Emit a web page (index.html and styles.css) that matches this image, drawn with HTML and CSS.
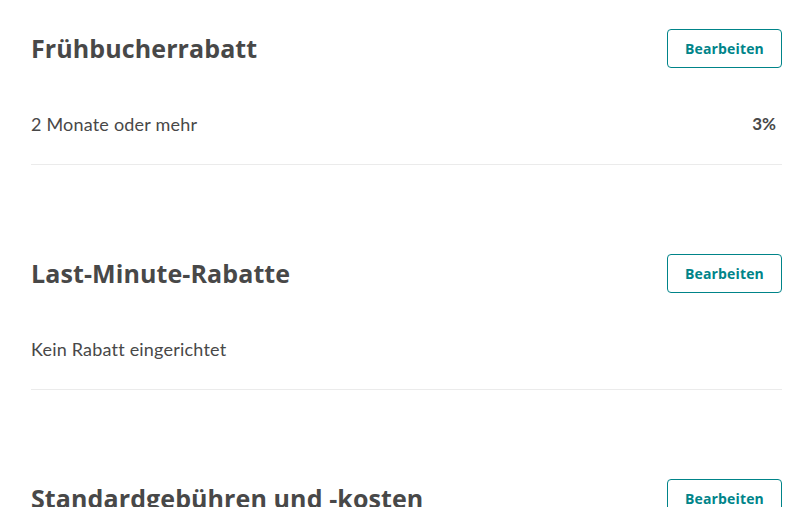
FILE: index.html
```html
<!DOCTYPE html>
<html lang="de">
<head>
<meta charset="utf-8">
<link rel="stylesheet" href="styles.css">
</head>
<body>
<main class="page">
  <section class="section">
    <div class="section-head">
      <h2 class="title">Frühbucherrabatt</h2>
      <button class="edit">Bearbeiten</button>
    </div>
    <div class="row">
      <span class="label">2 Monate oder mehr</span>
      <span class="value">3%</span>
    </div>
  </section>
  <section class="section">
    <div class="section-head">
      <h2 class="title">Last-Minute-Rabatte</h2>
      <button class="edit">Bearbeiten</button>
    </div>
    <div class="row">
      <span class="label">Kein Rabatt eingerichtet</span>
    </div>
  </section>
  <section class="section">
    <div class="section-head">
      <h2 class="title">Standardgebühren und -kosten</h2>
      <button class="edit">Bearbeiten</button>
    </div>
  </section>
</main>
</body>
</html>
```
FILE: styles.css
```css
html, body {
  margin: 0;
  padding: 0;
  background: #ffffff;
  overflow: hidden;
}
.page {
  padding: 29px 7px 0 31px;
  font-family: "Lato", "Open Sans", sans-serif;
  color: #484848;
}
.section {
  margin-bottom: 89px;
}
.section-head {
  display: flex;
  justify-content: space-between;
  align-items: center;
  height: 39px;
}
.title {
  margin: 0;
  font-family: "Open Sans", sans-serif;
  font-weight: 700;
  font-size: 25px;
  letter-spacing: 0.1px;
  line-height: 36px;
  padding-bottom: 2px;
  color: #484848;
}
.edit {
  box-sizing: border-box;
  height: 39px;
  width: 115px;
  border: 1px solid #008489;
  border-radius: 4px;
  background: #fff;
  color: #008489;
  font-family: "Open Sans", sans-serif;
  font-weight: 700;
  font-size: 14px;
  letter-spacing: 0.15px;
  padding: 0;
}
.row {
  display: flex;
  justify-content: space-between;
  align-items: center;
  margin-top: 44px;
  padding-bottom: 28px;
  border-bottom: 1px solid #ebebeb;
  line-height: 24px;
  font-size: 18px;
}
.label {
  letter-spacing: 0.2px;
}
.value {
  font-weight: 700;
  font-size: 17px;
  padding-right: 6px;
}
```
